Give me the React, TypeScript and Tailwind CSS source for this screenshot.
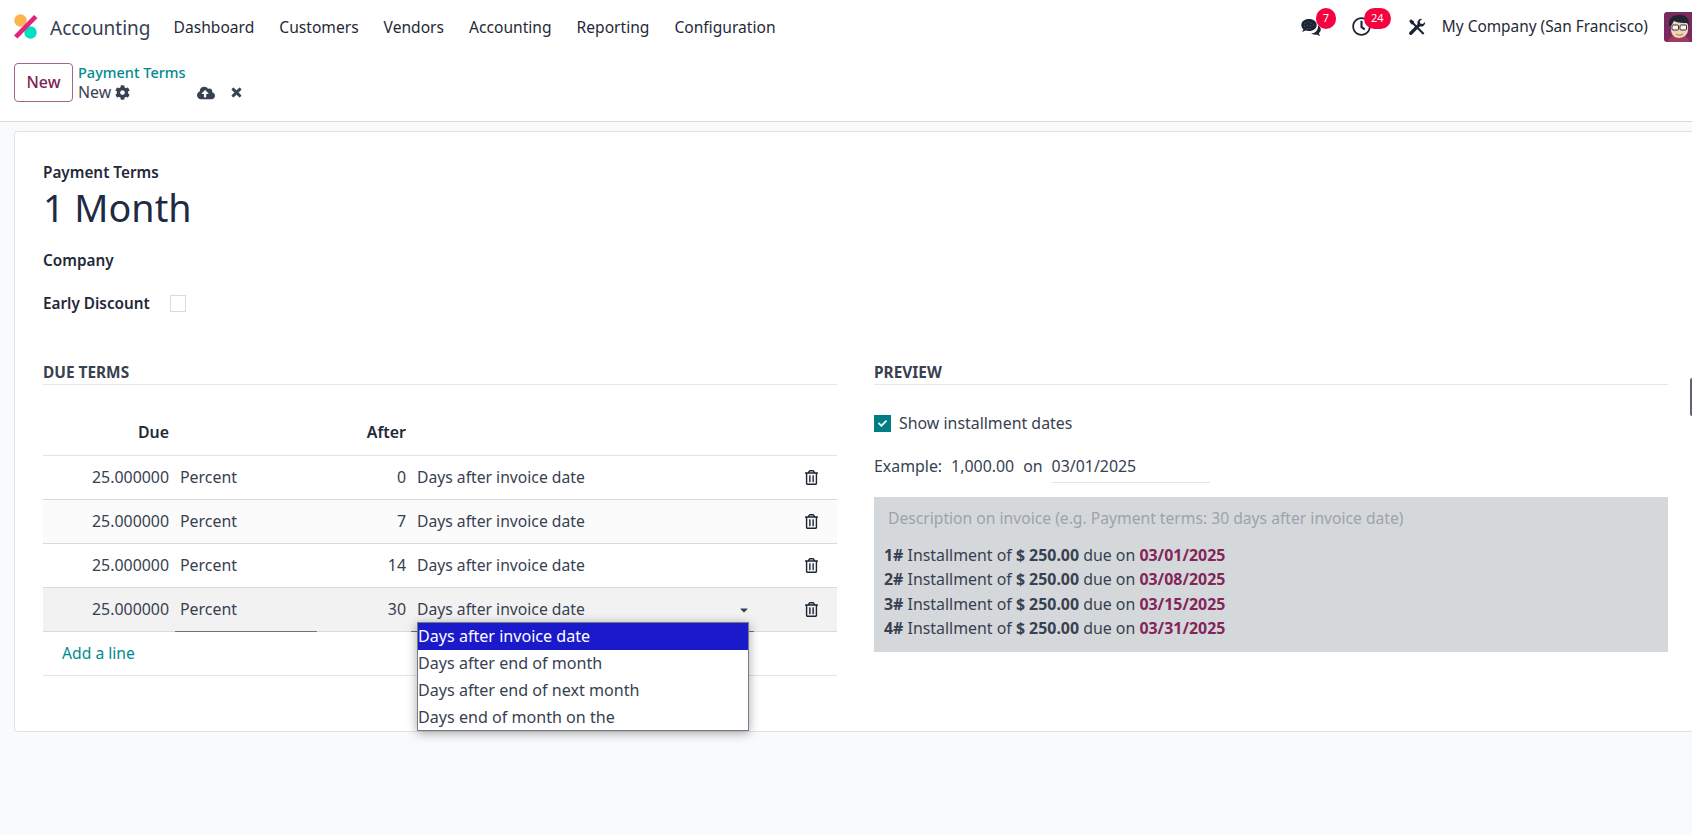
import { FaRegClock, FaCog, FaCloudUploadAlt, FaTimes, FaRegTrashAlt, FaCaretDown, FaCheck } from "react-icons/fa";

const rows = [
  { days: "0", bg: "bg-white" },
  { days: "7", bg: "bg-[#fbfbfb]" },
  { days: "14", bg: "bg-white" },
  { days: "30", bg: "bg-[#f2f2f2]" },
];
const lines = [
  ["1#", "03/01/2025"],
  ["2#", "03/08/2025"],
  ["3#", "03/15/2025"],
  ["4#", "03/31/2025"],
];
const nav = ["Dashboard", "Customers", "Vendors", "Accounting", "Reporting", "Configuration"];

function Logo() {
  return (
    <svg viewBox="0 0 24 25" className="w-[25px] h-[25px] shrink-0">
      <circle cx="7" cy="6.5" r="6.2" fill="#fdb44e" />
      <circle cx="17" cy="18.5" r="6.2" fill="#00e0c0" />
      <path d="M20.5 1 L24 4 L4 24.5 L0.5 21.5 Z" fill="#e0257a" />
    </svg>
  );
}

function Tools() {
  return (
    <svg viewBox="0 0 18 18" className="w-[18px] h-[18px] text-[#1b2433]" fill="currentColor">
      <path d="M1.2 3 L3 1.2 L6 3.4 L6.2 5 L16.4 15.2 L14.9 16.7 L4.8 6.4 L3.2 6.2 Z" />
      <path d="M17.2 4 A4.2 4.2 0 0 1 11.8 8.4 L4 16.4 A1.6 1.6 0 0 1 1.6 14 L9.5 6.2 A4.2 4.2 0 0 1 14 .9 L11.8 3.3 L12.3 5.6 L14.7 6.1 Z" />
    </svg>
  );
}

function Chat() {
  return (
    <svg viewBox="0 0 20 20" className="w-[20px] h-[20px]">
      <path d="M8 2 C3.5 2 .3 4.6 .3 8 C.3 9.7 1.1 11.2 2.4 12.3 L1.2 15 L4.6 13.5 C5.6 13.8 6.8 14 8 14 C12.5 14 15.7 11.4 15.7 8 C15.7 4.6 12.5 2 8 2 Z" fill="#1b2433" />
      <path d="M17 8.5 C18.8 9.4 19.8 10.9 19.8 12.6 C19.8 14 19 15.3 17.9 16.2 L19 19 L15.4 17.5 C13.7 17.9 11.6 17.6 10 16.6 C14 16.3 17.4 13.4 17 8.5 Z" fill="#1b2433" />
      <g fill="#6b7280">
        <circle cx="4" cy="6" r=".6" /><circle cx="7" cy="5" r=".6" /><circle cx="10" cy="6" r=".6" />
        <circle cx="3.5" cy="9" r=".6" /><circle cx="6.5" cy="8.5" r=".6" /><circle cx="9.5" cy="9" r=".6" /><circle cx="12.5" cy="8" r=".6" />
        <circle cx="6" cy="11.5" r=".6" /><circle cx="9" cy="11.5" r=".6" />
      </g>
    </svg>
  );
}

function Avatar() {
  return (
    <svg viewBox="0 0 30 30" className="w-[30px] h-[30px] shrink-0 rounded-[3px]">
      <rect width="30" height="30" fill="#7a2a5e" />
      <path d="M4 30 C5 25 10 23 15 23 C20 23 25 25 26 30 Z" fill="#a03a60" />
      <path d="M7 14 C7 8 10 6 15 6 C20 6 24 8 24 14 L24 18 C24 23 19 26 15 26 C11 26 7 23 7 18 Z" fill="#f3d3b4" />
      <path d="M5 14 C4 6 9 3 14 3 C20 2 26 5 25 14 L23 11 C19 11 14 11 10 9 L7 14 Z" fill="#232334" />
      <rect x="8" y="13" width="6.5" height="5" rx="1" fill="#f6f6f6" stroke="#333" strokeWidth="1" />
      <rect x="16" y="13" width="6.5" height="5" rx="1" fill="#f6f6f6" stroke="#333" strokeWidth="1" />
      <path d="M12 22 C14 23.5 17 23.5 19 22" fill="none" stroke="#a86a50" strokeWidth="1" />
    </svg>
  );
}

export default function App() {
  return (
    <div className="relative w-[1692px] h-[834px] overflow-hidden bg-[#f9fafb] text-[15.9px] text-[#374151] font-['Noto_Sans',sans-serif]">
      <header className="bg-white h-[46px] pt-[9px] flex items-start">
        <div className="pl-[13px] flex items-center h-[37px] -mt-[1px]">
          <Logo />
        </div>
        <div className="ml-[12px] h-[38px] flex items-center text-[19px] text-[#374151]">Accounting</div>
        <nav className="ml-[23px] h-[38px] flex items-center gap-[25px] text-[15.6px] text-[#1f2937]">
          {nav.map((n) => (
            <span key={n}>{n}</span>
          ))}
        </nav>
        <div className="ml-auto h-[38px] -mt-[1px] flex items-center -mr-[2px]">
          <div className="relative w-[34px] h-[20px]">
            <Chat />
            <span className="absolute left-[15px] top-[-9px] w-[20px] h-[21px] rounded-full bg-[#f5033f] text-white text-[11px] flex items-center justify-center">7</span>
          </div>
          <div className="relative ml-[17px] w-[38px] h-[20px]">
            <FaRegClock className="w-[19px] h-[19px] text-[#1b2433]" />
            <span className="absolute left-[12px] top-[-9px] w-[27px] h-[21px] rounded-full bg-[#f5033f] text-white text-[11px] flex items-center justify-center">24</span>
          </div>
          <div className="ml-[18px]"><Tools /></div>
          <span className="ml-[16px] text-[15.4px] text-[#1f2937]">My Company (San Francisco)</span>
          <div className="ml-[16px]"><Avatar /></div>
        </div>
      </header>

      <div className="bg-white h-[76px] border-b border-[#d8dadd] flex items-start pl-[14px] pt-[17px]">
        <button className="w-[59px] h-[39px] rounded-[4px] border border-[#a2668f] text-[#7c2255] font-medium flex items-center justify-center">New</button>
        <div className="ml-[5px] -mt-[1px]">
          <div className="text-[#018a90] font-medium text-[14.5px] leading-[21px]">Payment Terms</div>
          <div className="flex items-center leading-[21px] -mt-[1px]">
            <span>New</span>
            <FaCog className="ml-[4px] w-[15px] h-[15px]" />
            <FaCloudUploadAlt className="ml-[67px] w-[18px] h-[18px]" />
            <FaTimes className="ml-[15px] w-[13px] h-[13px] stroke-current stroke-[30]" />
          </div>
        </div>
      </div>

      <main className="mt-[9px] ml-[14px] bg-white border border-[#dee2e6] border-r-0 rounded-l-[4px] h-[601px] pl-[28px] pr-[24px] pt-[30px]">
        <div className="font-semibold text-[15.3px] text-[#1f2937] leading-[21px]">Payment Terms</div>
        <div className="text-[37.7px] leading-[50px] text-[#1f2a44]">1 Month</div>
        <div className="font-semibold text-[15.3px] text-[#1f2937] leading-[21px] mt-[17px]">Company</div>
        <div className="flex items-center mt-[22px] h-[21px] font-semibold text-[15.3px] text-[#1f2937]">
          <span className="w-[127px]">Early Discount</span>
          <span className="w-[16px] h-[17px] border border-[#d8dadd] bg-white" />
        </div>

        <div className="flex gap-[37px] mt-[48px]">
          <section className="relative w-[794px] shrink-0">
            <h3 className="font-bold text-[15.4px] leading-[21px] text-[#374151] border-b border-[#e5e7eb] pb-[1px] h-[23px]">DUE TERMS</h3>
            <div className="flex items-center h-[71px] pt-[26px] border-b border-[#e1e3e6] font-semibold text-[#1f2937]">
              <span className="w-[126px] text-right">Due</span>
              <span className="w-[237px] text-right">After</span>
            </div>
            {rows.map((r) => (
              <div key={r.days} className={`relative flex items-center h-[44px] border-b border-[#d8dadd] ${r.bg}`}>
                <span className="w-[126px] text-right">25.000000</span>
                <span className="w-[237px] pl-[11px] flex justify-between">
                  <span>Percent</span>
                  <span>{r.days}</span>
                </span>
                <span className="ml-[11px] text-[15.7px]">Days after invoice date</span>
                <FaRegTrashAlt className="absolute left-[761px] w-[15px] h-[15px] text-[#1b2433]" />
                {r.days === "30" && <FaCaretDown className="absolute left-[695px] w-[12px] h-[12px] text-[#374151]" />}
                {r.days === "30" && <span className="absolute left-[132px] w-[142px] h-[1px] -bottom-[1px] bg-[#6b7280]" />}
                {r.days === "30" && <span className="absolute left-[368px] w-[343px] h-[1px] -bottom-[1px] bg-[#6b7280]" />}
              </div>
            ))}
            <div className="h-[44px] pl-[19px] flex items-center border-b border-[#e1e3e6] text-[15.7px] text-[#018a90]">Add a line</div>

            <div className="absolute left-[374px] top-[260px] w-[332px] h-[109px] bg-white border border-[#767b85] shadow-[0_2px_10px_rgba(0,0,0,0.35)] text-[16.1px] text-[#374151] leading-[27px]">
              <div className="bg-[#1a1acb] text-white">Days after invoice date</div>
              <div>Days after end of month</div>
              <div>Days after end of next month</div>
              <div>Days end of month on the</div>
            </div>
          </section>

          <section className="w-[794px] shrink-0">
            <h3 className="font-bold text-[15.4px] leading-[21px] text-[#374151] border-b border-[#e5e7eb] pb-[1px] h-[23px]">PREVIEW</h3>
            <div className="flex items-center mt-[30px] h-[17px]">
              <span className="w-[17px] h-[17px] bg-[#017e84] flex items-center justify-center">
                <FaCheck className="w-[9px] h-[9px] text-white" />
              </span>
              <span className="ml-[8px]">Show installment dates</span>
            </div>
            <div className="flex mt-[23px] items-start">
              <span className="leading-[22px]">Example:</span>
              <span className="leading-[22px] ml-[9px]">1,000.00</span>
              <span className="leading-[22px] ml-[9px]">on</span>
              <span className="ml-[9px] w-[158px] leading-[22px] h-[28px] border-b border-[#e1e3e6]">03/01/2025</span>
            </div>
            <div className="mt-[14px] h-[155px] bg-[#d5d8db] pl-[10px] pt-[10px]">
              <div className="pl-[4px] leading-[22px] text-[15.66px] text-[#9ca3af]">Description on invoice (e.g. Payment terms: 30 days after invoice date)</div>
              <div className="mt-[14px] leading-[24.3px]">
                {lines.map(([n, d]) => (
                  <div key={n}>
                    <b className="font-bold">{n}</b> Installment of <b className="font-bold">$ 250.00</b> due on{" "}
                    <b className="font-bold text-[#82265a]">{d}</b>
                  </div>
                ))}
              </div>
            </div>
          </section>
        </div>
      </main>

      <div className="absolute left-[1690px] top-[378px] w-[2px] h-[38px] rounded-l-[2px] bg-[#5f6472]" />
    </div>
  );
}
